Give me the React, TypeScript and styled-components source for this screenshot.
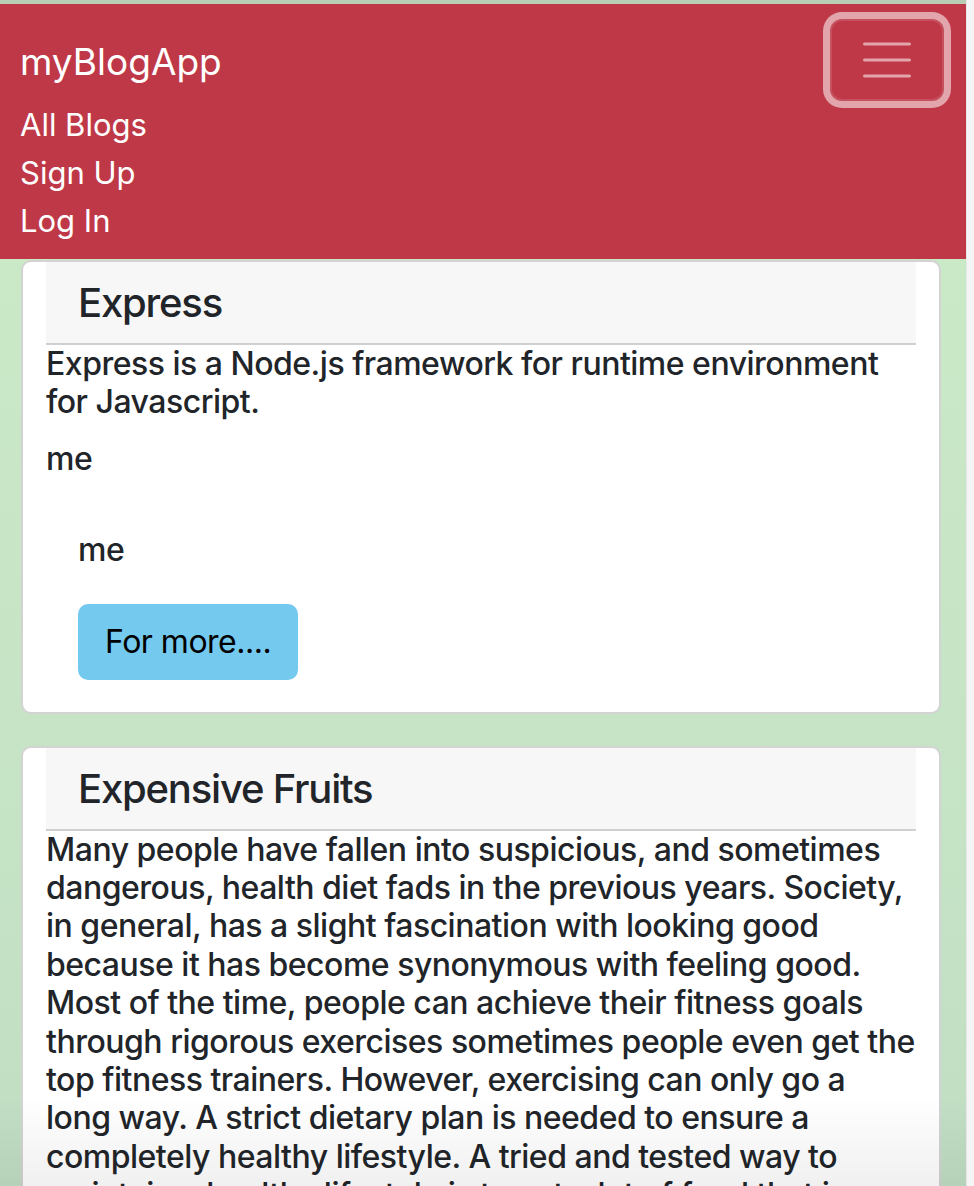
import styled, { createGlobalStyle } from 'styled-components';

const GlobalStyle = createGlobalStyle`
    html, body {
        margin: 0;
        padding: 0;
        overflow: hidden;
    }
    body {
        font-family: Inter, 'Noto Sans', sans-serif;
        color: #212529;
    }
`;

const BLOGS = [
    {
        title: 'Express',
        body: 'Express is a Node.js framework for runtime environment for Javascript.',
        author: 'me',
    },
    {
        title: 'Expensive Fruits',
        body: 'Many people have fallen into suspicious, and sometimes dangerous, health diet fads in the previous years. Society, in general, has a slight fascination with looking good because it has become synonymous with feeling good. Most of the time, people can achieve their fitness goals through rigorous exercises sometimes people even get the top fitness trainers. However, exercising can only go a long way. A strict dietary plan is needed to ensure a completely healthy lifestyle. A tried and tested way to maintain a healthy lifestyle is to eat a lot of food that is good for you.',
        author: 'me',
    },
];

const NAV_LINKS = ['All Blogs', 'Sign Up', 'Log In'];

const App = () => {
    return (
        <>
            <GlobalStyle />
            <Page>
                <Main>
                    <TopEdge />
                    <Navbar>
                        <BrandRow>
                            <Brand href="#">myBlogApp</Brand>
                            <Toggler aria-label="Toggle navigation">
                                <svg width="48" height="48" viewBox="0 0 48 48">
                                    <path
                                        d="M1.6 8h44.8M1.6 24h44.8M1.6 40h44.8"
                                        stroke="rgba(255,255,255,0.55)"
                                        strokeWidth="3.2"
                                        strokeLinecap="round"
                                    />
                                </svg>
                            </Toggler>
                        </BrandRow>
                        <NavList>
                            {NAV_LINKS.map((link) => (
                                <NavLink key={link} href="#">
                                    {link}
                                </NavLink>
                            ))}
                        </NavList>
                    </Navbar>

                    <CardList>
                        {BLOGS.map((blog) => (
                            <Card key={blog.title}>
                                <CardHeader>{blog.title}</CardHeader>
                                <Description>{blog.body}</Description>
                                <Author>{blog.author}</Author>
                                <CardBody>
                                    <BodyText>{blog.author}</BodyText>
                                    <MoreButton>For more....</MoreButton>
                                </CardBody>
                            </Card>
                        ))}
                    </CardList>
                    <BottomFade />
                </Main>
                <ScrollTrack />
            </Page>
        </>
    );
};

export default App;

const Page = styled.div`
    display: flex;
    width: 974px;
    height: 1186px;
    overflow: hidden;
    position: relative;
`;

const Main = styled.div`
    flex: 1;
    min-width: 0;
    background: linear-gradient(180deg, #cbebc7 0%, #c8e6c6 50%, #c1dec4 100%);
`;

const ScrollTrack = styled.div`
    width: 7px;
    background-color: #f5f5f5;
    border-left: 1px solid #e6e6e6;
`;

const TopEdge = styled.div`
    height: 4px;
    background-color: #b9cdb6;
`;

const Navbar = styled.nav`
    background-color: #bf3847;
    padding: 15px 22px 14px 20px;
`;

const BrandRow = styled.div`
    display: flex;
    align-items: center;
    justify-content: space-between;
`;

const Brand = styled.a`
    font-size: 37px;
    line-height: 48px;
    color: #fff;
    text-decoration: none;
    margin-top: 4px;
`;

const Toggler = styled.button`
    width: 114px;
    height: 82px;
    display: flex;
    align-items: center;
    justify-content: center;
    background: transparent;
    border: 2px solid rgba(255, 255, 255, 0.12);
    border-radius: 12px;
    box-shadow: 0 0 0 7px rgba(255, 255, 255, 0.55);
    padding: 0;
`;

const NavList = styled.div`
    display: flex;
    flex-direction: column;
`;

const NavLink = styled.a`
    font-size: 31px;
    line-height: 48px;
    color: #fff;
    text-decoration: none;
`;

const CardList = styled.div`
    display: flex;
    flex-direction: column;
    gap: 32px;
    padding: 1px 25px 0 21px;
`;

const Card = styled.div`
    background-color: #fff;
    border: 2px solid #d3d3d3;
    border-radius: 10px;
    padding: 0 23px 32px;
`;

const CardHeader = styled.h3`
    margin: 0;
    background-color: #f7f7f7;
    border-bottom: 2px solid #d0d0d0;
    padding: 14px 32px 13px;
    font-size: 40px;
    line-height: 54px;
    letter-spacing: -1.2px;
    font-weight: 500;
`;

const Description = styled.p`
    margin: 0;
    font-size: 32px;
    line-height: 38.4px;
    font-weight: 500;
    letter-spacing: -0.5px;
`;

const Author = styled(Description)`
    margin-top: 18px;
`;

const CardBody = styled.div`
    padding: 53px 32px 0;
`;

const BodyText = styled(Description)``;

const MoreButton = styled.button`
    margin-top: 34px;
    background-color: #74c9ef;
    border: none;
    border-radius: 10px;
    padding: 14px 27px;
    font-family: inherit;
    font-size: 32px;
    line-height: 48px;
    letter-spacing: -0.5px;
    color: #000;
`;

const BottomFade = styled.div`
    position: absolute;
    left: 0;
    right: 8px;
    bottom: 0;
    height: 90px;
    pointer-events: none;
    background: linear-gradient(180deg, rgba(0, 0, 0, 0) 0%, rgba(0, 0, 0, 0.06) 100%);
`;
